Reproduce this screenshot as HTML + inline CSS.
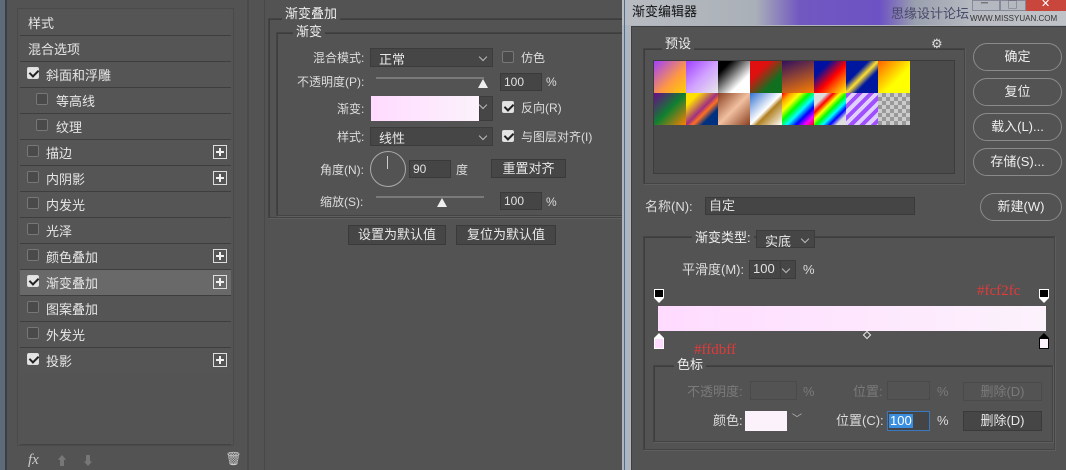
<!DOCTYPE html>
<html><head><meta charset="utf-8"><style>
*{margin:0;padding:0;box-sizing:border-box}
body{width:1066px;height:470px;overflow:hidden;background:#535353;font-family:"Liberation Sans","Noto Sans CJK SC",sans-serif;font-size:12px;color:#dcdcdc;position:relative}
.a{position:absolute}
.t{position:absolute;white-space:nowrap;line-height:14px}
.row{position:absolute;left:20px;width:211px;height:26px;border-bottom:1px solid #3e3e3e;background:#555}
.row span{position:absolute;top:3px;font-size:13px;color:#e6e6e6}
.row .cb{top:5px!important}
.cb{position:absolute;width:12px;height:12px;border:1px solid #777;background:#4a4a4a;border-radius:2px}
.cb.on{background:#e4e4e4;border-color:#ddd}
.cb.on:after{content:"";position:absolute;left:3px;top:0px;width:4px;height:7px;border:solid #222;border-width:0 2px 2px 0;transform:rotate(45deg)}
.plus{position:absolute;left:193px;top:5px;width:14px;height:14px;border:1px solid #ddd}
.plus:before{content:"";position:absolute;left:2px;top:5px;width:8px;height:2px;background:#eee}
.plus:after{content:"";position:absolute;left:5px;top:2px;width:2px;height:8px;background:#eee}
.box{position:absolute;border:1px solid #444;box-shadow:inset 1px 1px 0 #3d3d3d,1px 1px 0 #5e5e5e}
.inp{position:absolute;background:#454545;border:1px solid #3a3a3a;color:#e0e0e0;padding-left:3px;line-height:16px;font-size:12px}
.dd{position:absolute;background:#464646;border:1px solid #3c3c3c;color:#e8e8e8;padding-left:8px;font-size:13px}
.dd:after{content:"";position:absolute;right:6px;top:5px;width:5px;height:5px;border:solid #bbb;border-width:0 1px 1px 0;transform:rotate(45deg)}
.btn{position:absolute;background:#464646;border:1px solid #3a3a3a;color:#e8e8e8;text-align:center;font-size:13px}
.pill{position:absolute;border:1.5px solid #8a8a8a;border-radius:14px;text-align:center;color:#eee;font-size:13px;line-height:25px;background:#535353}
.track{position:absolute;height:2px;background:#7a7a7a}
.thumb{position:absolute;width:0;height:0;border-left:5px solid transparent;border-right:5px solid transparent;border-bottom:9px solid #eee}
</style></head><body>
<div class="a" style="left:0;top:0;width:5px;height:470px;background:#5d6a78"></div>
<div class="a" style="left:5px;top:0;width:2px;height:470px;background:#3b3f44"></div>
<div class="a" style="left:17px;top:8px;width:217px;height:438px;background:#545454;border:1px solid #4a4a4a"></div>
<div class="row" style="top:10px"><span style="left:8px">样式</span></div>
<div class="row" style="top:36px"><span style="left:8px">混合选项</span></div>
<div class="row" style="top:62px"><div class="cb on" style="left:7px"></div><span style="left:26px">斜面和浮雕</span></div>
<div class="row" style="top:88px"><div class="cb" style="left:16px"></div><span style="left:36px">等高线</span></div>
<div class="row" style="top:114px"><div class="cb" style="left:16px"></div><span style="left:36px">纹理</span></div>
<div class="row" style="top:140px"><div class="cb" style="left:7px"></div><span style="left:26px">描边</span><div class="plus"></div></div>
<div class="row" style="top:166px"><div class="cb" style="left:7px"></div><span style="left:26px">内阴影</span><div class="plus"></div></div>
<div class="row" style="top:192px"><div class="cb" style="left:7px"></div><span style="left:26px">内发光</span></div>
<div class="row" style="top:218px"><div class="cb" style="left:7px"></div><span style="left:26px">光泽</span></div>
<div class="row" style="top:244px"><div class="cb" style="left:7px"></div><span style="left:26px">颜色叠加</span><div class="plus"></div></div>
<div class="row" style="top:270px;background:#696969"><div class="cb on" style="left:7px"></div><span style="left:26px">渐变叠加</span><div class="plus"></div></div>
<div class="row" style="top:296px"><div class="cb" style="left:7px"></div><span style="left:26px">图案叠加</span></div>
<div class="row" style="top:322px"><div class="cb" style="left:7px"></div><span style="left:26px">外发光</span></div>
<div class="row" style="top:348px;border-bottom:none"><div class="cb on" style="left:7px"></div><span style="left:26px">投影</span><div class="plus"></div></div>
<div class="a" style="left:20px;top:444px;width:211px;height:1px;background:#444"></div>
<div class="t" style="left:28px;top:453px;font-style:italic;font-family:'Liberation Serif',serif;font-size:15px;color:#ccc">fx</div>
<div class="t" style="left:56px;top:454px;color:#777;font-size:12px">⬆</div>
<div class="t" style="left:82px;top:454px;color:#777;font-size:12px">⬇</div>
<div class="t" style="left:225px;top:452px;color:#ccc;font-size:13px">🗑</div>
<div class="a" style="left:247px;top:0;width:2px;height:470px;background:#4a4a4a"></div>
<div class="a" style="left:264px;top:0;width:1px;height:470px;background:#484848"></div>
<div class="box" style="left:268px;top:18px;width:360px;height:200px;border-right:none"></div>
<div class="t" style="left:282px;top:7px;background:#535353;padding:0 3px;font-size:13px;color:#eee">渐变叠加</div>
<div class="box" style="left:276px;top:32px;width:352px;height:184px;border-right:none"></div>
<div class="t" style="left:293px;top:25px;background:#535353;padding:0 3px;font-size:13px;color:#eee">渐变</div>
<div class="t" style="left:313px;top:51px;color:#ddd">混合模式:</div>
<div class="dd" style="left:370px;top:48px;width:123px;height:19px">正常</div>
<div class="cb" style="left:502px;top:51px"></div><div class="t" style="left:521px;top:51px">仿色</div>
<div class="t" style="left:297px;top:75px">不透明度(P):</div>
<div class="track" style="left:376px;top:77px;width:108px"></div>
<div class="thumb" style="left:478px;top:79px"></div>
<div class="inp" style="left:500px;top:73px;width:42px;height:18px">100</div>
<div class="t" style="left:546px;top:75px">%</div>
<div class="t" style="left:337px;top:102px">渐变:</div>
<div class="a" style="left:371px;top:96px;width:108px;height:25px;background:linear-gradient(90deg,#ffdbff,#fcf2fc)"></div>
<div class="dd" style="left:479px;top:96px;width:14px;height:25px;padding:0"></div>
<div class="cb on" style="left:502px;top:101px"></div><div class="t" style="left:521px;top:101px">反向(R)</div>
<div class="t" style="left:337px;top:130px">样式:</div>
<div class="dd" style="left:370px;top:127px;width:123px;height:19px">线性</div>
<div class="cb on" style="left:502px;top:130px"></div><div class="t" style="left:521px;top:130px">与图层对齐(I)</div>
<div class="t" style="left:320px;top:163px">角度(N):</div>
<div class="a" style="left:370px;top:151px;width:36px;height:36px;border:1px solid #aaa;border-radius:50%"></div>
<div class="a" style="left:387px;top:156px;width:1px;height:13px;background:#ccc"></div>
<div class="inp" style="left:409px;top:160px;width:42px;height:18px">90</div>
<div class="t" style="left:456px;top:163px">度</div>
<div class="btn" style="left:491px;top:159px;width:75px;height:19px;line-height:17px">重置对齐</div>
<div class="t" style="left:320px;top:195px">缩放(S):</div>
<div class="track" style="left:376px;top:196px;width:108px"></div>
<div class="thumb" style="left:437px;top:198px"></div>
<div class="inp" style="left:500px;top:192px;width:42px;height:18px">100</div>
<div class="t" style="left:546px;top:195px">%</div>
<div class="btn" style="left:348px;top:225px;width:98px;height:20px;line-height:18px">设置为默认值</div>
<div class="btn" style="left:456px;top:225px;width:100px;height:20px;line-height:18px">复位为默认值</div>
<div class="a" style="left:622px;top:0;width:444px;height:470px;background:#aeb5bd"></div>
<div class="a" style="left:622px;top:0;width:444px;height:25px;background:linear-gradient(90deg,#b9bdc2 0,#aab0b8 30%,#7158c0 40%,#6d52c4 58%,#9aa0ae 66%,#b8bcc2 80%,#c0c3c8 100%)"></div>
<div class="a" style="left:624px;top:0;width:1px;height:470px;background:#4d6e92"></div>
<div class="t" style="left:632px;top:5px;color:#111;font-size:13px">渐变编辑器</div>
<div class="t" style="left:891px;top:7px;color:#4a4a6a;font-size:13px">思缘设计论坛</div>
<div class="t" style="left:970px;top:12px;color:#333;font-size:8px">WWW.MISSYUAN.COM</div>
<div class="a" style="left:972px;top:0;width:28px;height:11px;background:#b4b8c0;border:1px solid #889"></div>
<div class="a" style="left:1000px;top:0;width:26px;height:11px;background:#b4b8c0;border:1px solid #889"></div>
<div class="t" style="left:981px;top:-3px;color:#333;font-size:10px">─</div>
<div class="t" style="left:1008px;top:-2px;color:#333;font-size:9px">▢</div>
<div class="a" style="left:1026px;top:0;width:40px;height:11px;background:#c8463c"></div>
<div class="t" style="left:1041px;top:-3px;color:#fff;font-size:11px">✕</div>
<div class="a" style="left:631px;top:26px;width:435px;height:444px;background:#535353;border-left:1px solid #3f3f3f;border-top:1px solid #3f3f3f"></div>
<div class="box" style="left:643px;top:48px;width:322px;height:136px"></div>
<div class="t" style="left:662px;top:37px;background:#535353;padding:0 3px;font-size:13px;color:#eee">预设</div>
<div class="t" style="left:931px;top:37px;font-size:13px;color:#ddd">⚙</div>
<div class="a" style="left:653px;top:60px;width:302px;height:114px;background:#4b4b4b;border:1px solid #3c3c3c"></div>
<div class="a" style="left:654px;top:61px;width:256px;height:64px;display:grid;grid-template-columns:repeat(8,32px);grid-template-rows:32px 32px">
<div style="background:linear-gradient(135deg,#a040ff,#ff9a40 60%,#ffd000)"></div>
<div style="background:linear-gradient(135deg,#a040ff,#d0a0ff 50%,#e8e8e8)"></div>
<div style="background:linear-gradient(135deg,#000 20%,#fff 70%)"></div>
<div style="background:linear-gradient(135deg,#e01010 30%,#107020 70%)"></div>
<div style="background:linear-gradient(160deg,#301060,#ff8000)"></div>
<div style="background:linear-gradient(135deg,#0010a0 25%,#ff0000 55%,#ffff00)"></div>
<div style="background:linear-gradient(135deg,#0018a0 35%,#ffe030 50%,#0018a0 65%)"></div>
<div style="background:linear-gradient(135deg,#ff6000,#ffff00 60%)"></div>
<div style="background:linear-gradient(135deg,#6a0a8a,#108030 50%,#ff8000)"></div>
<div style="background:linear-gradient(135deg,#ffe000 20%,#a03080 50%,#ff7020 60%,#003080 75%)"></div>
<div style="background:linear-gradient(135deg,#8a4020,#f0c0a0 50%,#8a4020)"></div>
<div style="background:linear-gradient(135deg,#3070d0,#fff 50%,#b08020 60%,#fff)"></div>
<div style="background:linear-gradient(135deg,red,orange,yellow,lime,cyan,blue,magenta,red)"></div>
<div style="background:linear-gradient(135deg,#ddd 20%,red,yellow,lime,cyan,blue,#ddd 85%)"></div>
<div style="background:repeating-linear-gradient(135deg,#a050ff 0 4px,#e0d0ff 4px 8px)"></div>
<div style="background:repeating-conic-gradient(#999 0 25%,#ccc 0 50%) 0 0/8px 8px"></div>
</div>
<div class="pill" style="left:973px;top:43px;width:89px;height:28px">确定</div>
<div class="pill" style="left:973px;top:78px;width:89px;height:28px">复位</div>
<div class="pill" style="left:973px;top:113px;width:89px;height:28px">载入(L)...</div>
<div class="pill" style="left:973px;top:148px;width:89px;height:28px">存储(S)...</div>
<div class="pill" style="left:980px;top:193px;width:82px;height:28px">新建(W)</div>
<div class="t" style="left:645px;top:200px;font-size:13px">名称(N):</div>
<div class="inp" style="left:705px;top:197px;width:210px;height:18px;font-size:13px">自定</div>
<div class="box" style="left:643px;top:236px;width:412px;height:214px"></div>
<div class="t" style="left:692px;top:231px;background:#535353;padding:0 3px;font-size:13px;color:#eee">渐变类型:</div>
<div class="dd" style="left:756px;top:230px;width:59px;height:18px;font-size:13px">实底</div>
<div class="t" style="left:682px;top:263px;font-size:13px">平滑度(M):</div>
<div class="inp" style="left:749px;top:260px;width:32px;height:19px;font-size:13px">100</div>
<div class="dd" style="left:780px;top:260px;width:16px;height:19px;padding:0"></div>
<div class="t" style="left:803px;top:263px;font-size:13px">%</div>
<div class="a" style="left:654px;top:289px;width:10px;height:9px;background:#000;border:1px solid #fff"></div>
<div class="a" style="left:654px;top:298px;width:0;height:0;border-left:5px solid transparent;border-right:5px solid transparent;border-top:5px solid #fff"></div>
<div class="a" style="left:1039px;top:289px;width:10px;height:9px;background:#000;border:1px solid #fff"></div>
<div class="a" style="left:1039px;top:298px;width:0;height:0;border-left:5px solid transparent;border-right:5px solid transparent;border-top:5px solid #fff"></div>
<div class="t" style="left:977px;top:284px;color:#e03a3a;font-family:'Liberation Serif',serif;font-size:15px">#fcf2fc</div>
<div class="a" style="left:658px;top:306px;width:388px;height:25px;background:linear-gradient(90deg,#ffdbff,#fcf2fc)"></div>
<div class="a" style="left:864px;top:332px;width:6px;height:6px;border:1px solid #eee;transform:rotate(45deg)"></div>
<div class="a" style="left:654px;top:333px;width:0;height:0;border-left:5px solid transparent;border-right:5px solid transparent;border-bottom:5px solid #fff"></div>
<div class="a" style="left:654px;top:338px;width:10px;height:11px;background:#ffdbff;border:1px solid #fff"></div>
<div class="a" style="left:1039px;top:333px;width:0;height:0;border-left:5px solid transparent;border-right:5px solid transparent;border-bottom:5px solid #000"></div>
<div class="a" style="left:1039px;top:338px;width:10px;height:11px;background:#fcf2fc;border:1px solid #000"></div>
<div class="t" style="left:694px;top:343px;color:#e03a3a;font-family:'Liberation Serif',serif;font-size:15px">#ffdbff</div>
<div class="box" style="left:653px;top:365px;width:400px;height:77px"></div>
<div class="t" style="left:674px;top:358px;background:#535353;padding:0 3px;font-size:13px;color:#eee">色标</div>
<div class="t" style="left:687px;top:385px;font-size:13px;color:#7a7a7a">不透明度:</div>
<div class="a" style="left:750px;top:381px;width:47px;height:19px;border:1px solid #4a4a4a"></div>
<div class="t" style="left:803px;top:385px;color:#7a7a7a;font-size:13px">%</div>
<div class="t" style="left:853px;top:385px;color:#7a7a7a;font-size:13px">位置:</div>
<div class="a" style="left:887px;top:381px;width:43px;height:19px;border:1px solid #4a4a4a"></div>
<div class="t" style="left:937px;top:385px;color:#7a7a7a;font-size:13px">%</div>
<div class="a" style="left:963px;top:382px;width:79px;height:19px;border:1px solid #4a4a4a;color:#7a7a7a;text-align:center;font-size:13px;line-height:17px">删除(D)</div>
<div class="t" style="left:713px;top:414px;font-size:13px">颜色:</div>
<div class="a" style="left:745px;top:411px;width:42px;height:20px;background:#fcf2fc"></div>
<div class="t" style="left:792px;top:413px;color:#bbb;font-size:10px">﹀</div>
<div class="t" style="left:836px;top:414px;font-size:13px">位置(C):</div>
<div class="a" style="left:887px;top:411px;width:43px;height:20px;background:#454545;border:1px solid #3a78c0"></div>
<div class="t" style="left:889px;top:414px;background:#3a8ee0;color:#fff;font-size:13px;padding:0 1px">100</div>
<div class="t" style="left:937px;top:414px;font-size:13px">%</div>
<div class="btn" style="left:963px;top:411px;width:79px;height:20px;line-height:18px">删除(D)</div>
</body></html>
